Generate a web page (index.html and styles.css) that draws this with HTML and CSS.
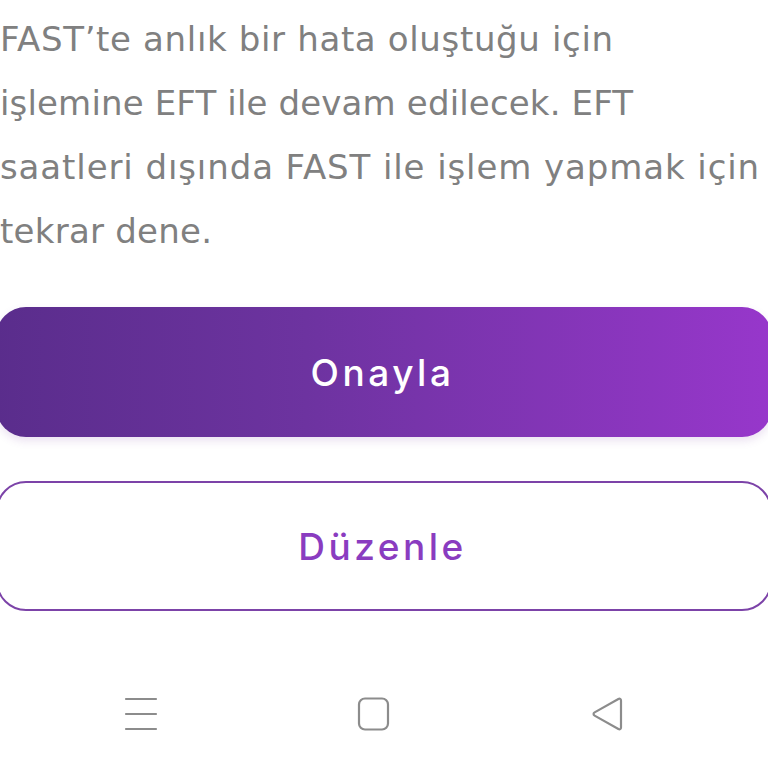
FILE: index.html
```html
<!DOCTYPE html>
<html lang="tr">
<head>
    <meta charset="UTF-8">
    <meta name="viewport" content="width=device-width, initial-scale=1.0">
    <title>FAST / EFT</title>
    <link rel="stylesheet" href="styles.css">
</head>
<body>
    <div class="sheet">
        <p class="message">
            <span class="line l1">FAST’te anlık bir hata oluştuğu için</span>
            <span class="line l2">işlemine EFT ile devam edilecek. EFT</span>
            <span class="line l3">saatleri dışında FAST ile işlem yapmak için</span>
            <span class="line l4">tekrar dene.</span>
        </p>

        <div class="actions">
            <button class="btn btn-primary">Onayla</button>
            <button class="btn btn-outline">Düzenle</button>
        </div>
    </div>

    <nav class="navbar">
        <span class="nav-icon">
            <svg width="34" height="36" viewBox="0 0 34 36">
                <path d="M2 3h30M2 18h30M2 33h30" stroke="#8c8c8c" stroke-width="2.2" stroke-linecap="round" fill="none"/>
            </svg>
        </span>
        <span class="nav-icon">
            <svg width="34" height="36" viewBox="0 0 34 36">
                <rect x="2" y="2.5" width="29" height="31" rx="6" stroke="#8c8c8c" stroke-width="2.2" fill="none"/>
            </svg>
        </span>
        <span class="nav-icon">
            <svg width="34" height="36" viewBox="0 0 34 36">
                <path d="M31 4.5v27c0 1.6-1.2 2.3-2.6 1.5L4.6 19.6c-1.4-.8-1.4-2.4 0-3.2L28.4 3c1.4-.8 2.6-.1 2.6 1.5z" stroke="#8c8c8c" stroke-width="2.2" stroke-linejoin="round" fill="none"/>
            </svg>
        </span>
    </nav>
</body>
</html>
```

FILE: styles.css
```css
* {
    box-sizing: border-box;
}
body {
    margin: 0;
    background: #ffffff;
    font-family: "DejaVu Sans", "Open Sans", Arial, sans-serif;
    overflow: hidden;
}
.sheet {
    margin: 0 -4px;
}
.message {
    margin: 0;
    padding: 7px 0 0 4px;
    color: #808080;
    font-size: 34px;
    line-height: 64px;
}
.line {
    display: block;
    white-space: nowrap;
}
.l1 {
    letter-spacing: 0.65px;
}
.l2 {
    letter-spacing: 0.15px;
}
.l3 {
    letter-spacing: 0.9px;
}
.l4 {
    letter-spacing: 0.25px;
}
.actions {
    display: flex;
    flex-direction: column;
    gap: 44px;
    margin-top: 44px;
}
.btn {
    height: 130px;
    border-radius: 30px;
    padding-left: 3px;
    font-family: Inter, Roboto, sans-serif;
    font-size: 37px;
    font-weight: 500;
    letter-spacing: 3.5px;
    cursor: pointer;
}
.btn-primary {
    border: none;
    color: #ffffff;
    background: linear-gradient(to right, #5a2d8c, #6d33a0 40%, #9737cb);
    box-shadow: 0 4px 8px rgba(120, 60, 160, 0.15);
}
.btn-outline {
    border: 2px solid #7c43a8;
    background: #ffffff;
    color: #8a3cc0;
}
.navbar {
    display: grid;
    grid-template-columns: repeat(3, 233px);
    padding-left: 24px;
    margin-top: 85px;
}
.nav-icon {
    display: flex;
    justify-content: center;
}
```
